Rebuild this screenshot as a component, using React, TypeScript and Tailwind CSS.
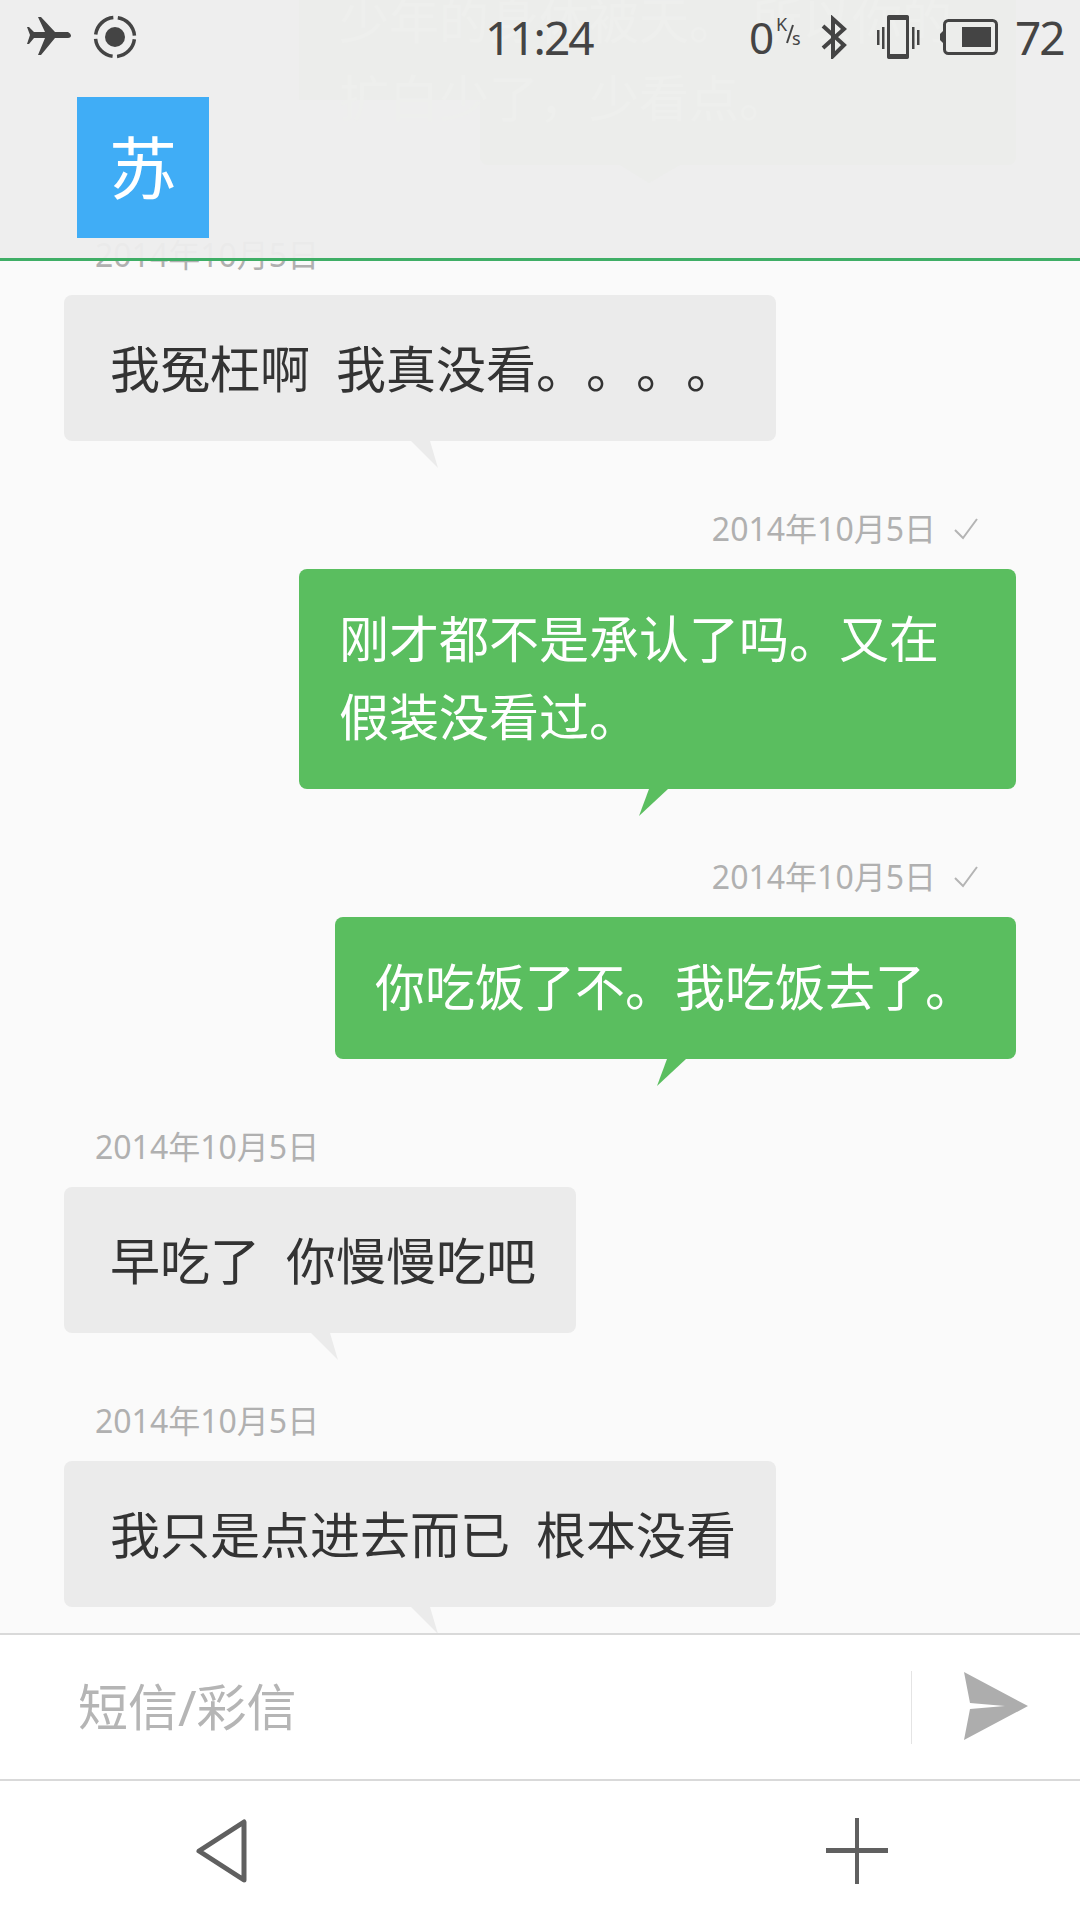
const fontStack = { fontFamily: '"Noto Sans", "Noto Sans CJK SC", sans-serif' };

function Tail({ out, color }: { out?: boolean; color: string }) {
  // bubble tail hangs under the middle of the bubble
  return (
    <svg
      width="30"
      height="27"
      viewBox="0 0 30 27"
      className={out ? 'absolute top-full left-[calc(50%-19px)]' : 'absolute top-full left-[calc(50%-9px)]'}
    >
      <polygon points={out ? '10,0 29,0 0,27' : '0,0 19,0 27,27'} fill={color} />
    </svg>
  );
}

function Stamp({ out }: { out?: boolean }) {
  if (out) {
    return (
      <div className="flex h-[48px] mb-4 items-center justify-end pr-[102px] text-[32px] text-[#b0b0b0]">
        <span>2014年10月5日</span>
        <svg width="24" height="22" viewBox="0 0 24 22" className="ml-[18px]">
          <polyline points="1,12 9,20 23,1" fill="none" stroke="#b4b4b4" strokeWidth="2" />
        </svg>
      </div>
    );
  }
  return (
    <div className="flex h-[48px] mb-4 items-center pl-[95px] text-[32px] text-[#b0b0b0]">
      2014年10月5日
    </div>
  );
}

function Incoming({ text, width }: { text: string; width: string }) {
  return (
    <div className="mb-16">
      <Stamp />
      <div className={`relative ml-16 rounded-lg bg-[#ebebeb] pl-[46px] pt-[34px] pb-[32px] text-[50px] leading-[80px] text-[#333333] whitespace-pre [text-spacing-trim:space-all] ${width}`}>
        {text}
        <Tail color="#ebebeb" />
      </div>
    </div>
  );
}

function Outgoing({ children, width }: { children: string; width: string }) {
  return (
    <div className="mb-16">
      <Stamp out />
      <div className={`relative ml-auto mr-16 rounded-lg bg-[#5abe5f] px-10 pt-[31px] pb-[33px] text-[50px] leading-[78px] text-white [text-spacing-trim:space-all] ${width}`}>
        {children}
        <Tail out color="#5abe5f" />
      </div>
    </div>
  );
}

function StatusBar() {
  return (
    <div className="relative flex h-[74px] items-center pl-[27px] text-[46px] tracking-[-2px] text-[#444444]">
      <svg width="44" height="38" viewBox="0 0 44 38" className="-mt-[2px]">
        <path
          d="M11 0 L14 0 L28 15 L41 15 Q44 16.5 44 18.5 Q44 20.5 41 21 L28 21 L14 38 L11 38 L18 21 L7 21 L2 27 L0 27 L3 18 L0 10 L2 10 L7 15 L18 15 Z"
          fill="#444444"
        />
      </svg>
      <svg width="44" height="44" viewBox="0 0 44 44" className="ml-[22px]">
        <circle cx="22" cy="22" r="19.5" fill="none" stroke="#444444" strokeWidth="3.5" strokeDasharray="26 4.63" strokeDashoffset="-2.3" />
        <circle cx="22" cy="22" r="10" fill="#444444" />
      </svg>
      <span className="ml-[348px] w-[107px]">11:24</span>
      <span className="ml-[157px] w-[24px] text-[44px]">0</span>
      <svg width="28" height="30" viewBox="0 0 28 30" className="ml-[3px] -mt-[10px]">
        <text x="0" y="14" fontSize="18" fill="#444444" style={fontStack}>K</text>
        <line x1="11" y1="26" x2="17" y2="8" stroke="#444444" strokeWidth="2" />
        <text x="16" y="28" fontSize="18" fill="#444444" style={fontStack}>s</text>
      </svg>
      <svg width="26" height="44" viewBox="0 0 26 44" className="ml-[17px]">
        <path d="M2 11 L23 30 L12 41 V4 L23 14 L2 33" fill="none" stroke="#444444" strokeWidth="4" />
      </svg>
      <svg width="44" height="44" viewBox="0 0 44 44" className="ml-[29px]">
        <rect x="12.5" y="1.5" width="19" height="41" rx="2" fill="none" stroke="#444444" strokeWidth="3" />
        <rect x="11" y="0" width="22" height="5" rx="2" fill="#444444" />
        <rect x="11" y="39" width="22" height="5" rx="2" fill="#444444" />
        <rect x="1" y="15" width="2.5" height="15" fill="#444444" />
        <rect x="6" y="12" width="2.5" height="22" fill="#444444" />
        <rect x="36" y="12" width="2.5" height="22" fill="#444444" />
        <rect x="41" y="15" width="2.5" height="15" fill="#444444" />
      </svg>
      <svg width="59" height="36" viewBox="0 0 59 36" className="ml-[19px]">
        <rect x="5.5" y="1.5" width="52" height="33" rx="4" fill="none" stroke="#444444" strokeWidth="3" />
        <rect x="23" y="8" width="29" height="20" fill="#444444" />
        <path d="M4 12 L1 15 V21 L4 24 Z" fill="#444444" />
      </svg>
      <span className="ml-[17px]">72</span>
    </div>
  );
}

function Header() {
  return (
    <div className="absolute inset-x-0 top-0 z-10 h-[261px] overflow-hidden border-b-[3px] border-[#3fae66] bg-[#ededed]/95">
      {/* previous bubble showing through the frosted bar */}
      <div className="absolute left-[480px] top-[100px] h-[65px] w-[536px] rounded-b-lg bg-[#ecedeb]" />
      <svg width="60" height="18" viewBox="0 0 60 18" className="absolute left-[620px] top-[165px]">
        <polygon points="0,0 60,0 29,18" fill="#ecedeb" />
      </svg>
      <div className="absolute left-[299px] -top-[19px] h-[119px] w-[717px] whitespace-pre bg-[#ecedeb] pl-10 text-[50px] leading-[78px] text-[#eeefed] [text-spacing-trim:space-all]">
        {'少年的身体被天。 所以你的\n扩白少了，少看点。'}
      </div>
      <div className="relative">
        <StatusBar />
        <div className="ml-[77px] mt-[23px] flex h-[141px] w-[132px] items-center justify-center bg-[#40adf6] text-[68px] text-white">
          苏
        </div>
      </div>
    </div>
  );
}

function Composer() {
  return (
    <div className="flex h-[148px] shrink-0 items-center border-y-2 border-[#d9d9d9] bg-white">
      <div className="flex-1 pl-[78px] text-[50px] text-[#b5b5b5]">短信/彩信</div>
      <div className="h-[73px] w-px bg-[#e4e4e4]" />
      <svg width="64" height="68" viewBox="0 0 64 68" className="ml-[52px] mr-[52px] -mt-[2px]">
        <polygon points="0,0 64,34 0,68 6,37 41,34 6,31" fill="#adadad" />
      </svg>
    </div>
  );
}

function NavBar() {
  return (
    <div className="flex h-[139px] shrink-0 items-center justify-between bg-white pl-[194px] pr-[192px]">
      <svg width="54" height="68" viewBox="0 0 54 68">
        <polygon points="50,5 50,63 5,34" fill="none" stroke="#606060" strokeWidth="5" strokeLinejoin="round" />
      </svg>
      <svg width="62" height="66" viewBox="0 0 62 66">
        <rect x="29" y="0" width="4" height="66" fill="#606060" />
        <rect x="0" y="30" width="62" height="5" fill="#606060" />
      </svg>
    </div>
  );
}

export default function App() {
  return (
    <div className="relative flex h-[1920px] w-[1080px] flex-col overflow-hidden bg-[#fafafa]" style={fontStack}>
      <Header />
      <div className="min-h-0 flex-1 overflow-hidden pt-[231px]">
        <Incoming text="我冤枉啊  我真没看。。。。" width="w-[712px]" />
        <Outgoing width="w-[717px]">刚才都不是承认了吗。又在假装没看过。</Outgoing>
        <Outgoing width="w-[681px]">你吃饭了不。我吃饭去了。</Outgoing>
        <Incoming text="早吃了  你慢慢吃吧" width="w-[512px]" />
        <Incoming text="我只是点进去而已  根本没看" width="w-[712px]" />
      </div>
      <Composer />
      <NavBar />
    </div>
  );
}
